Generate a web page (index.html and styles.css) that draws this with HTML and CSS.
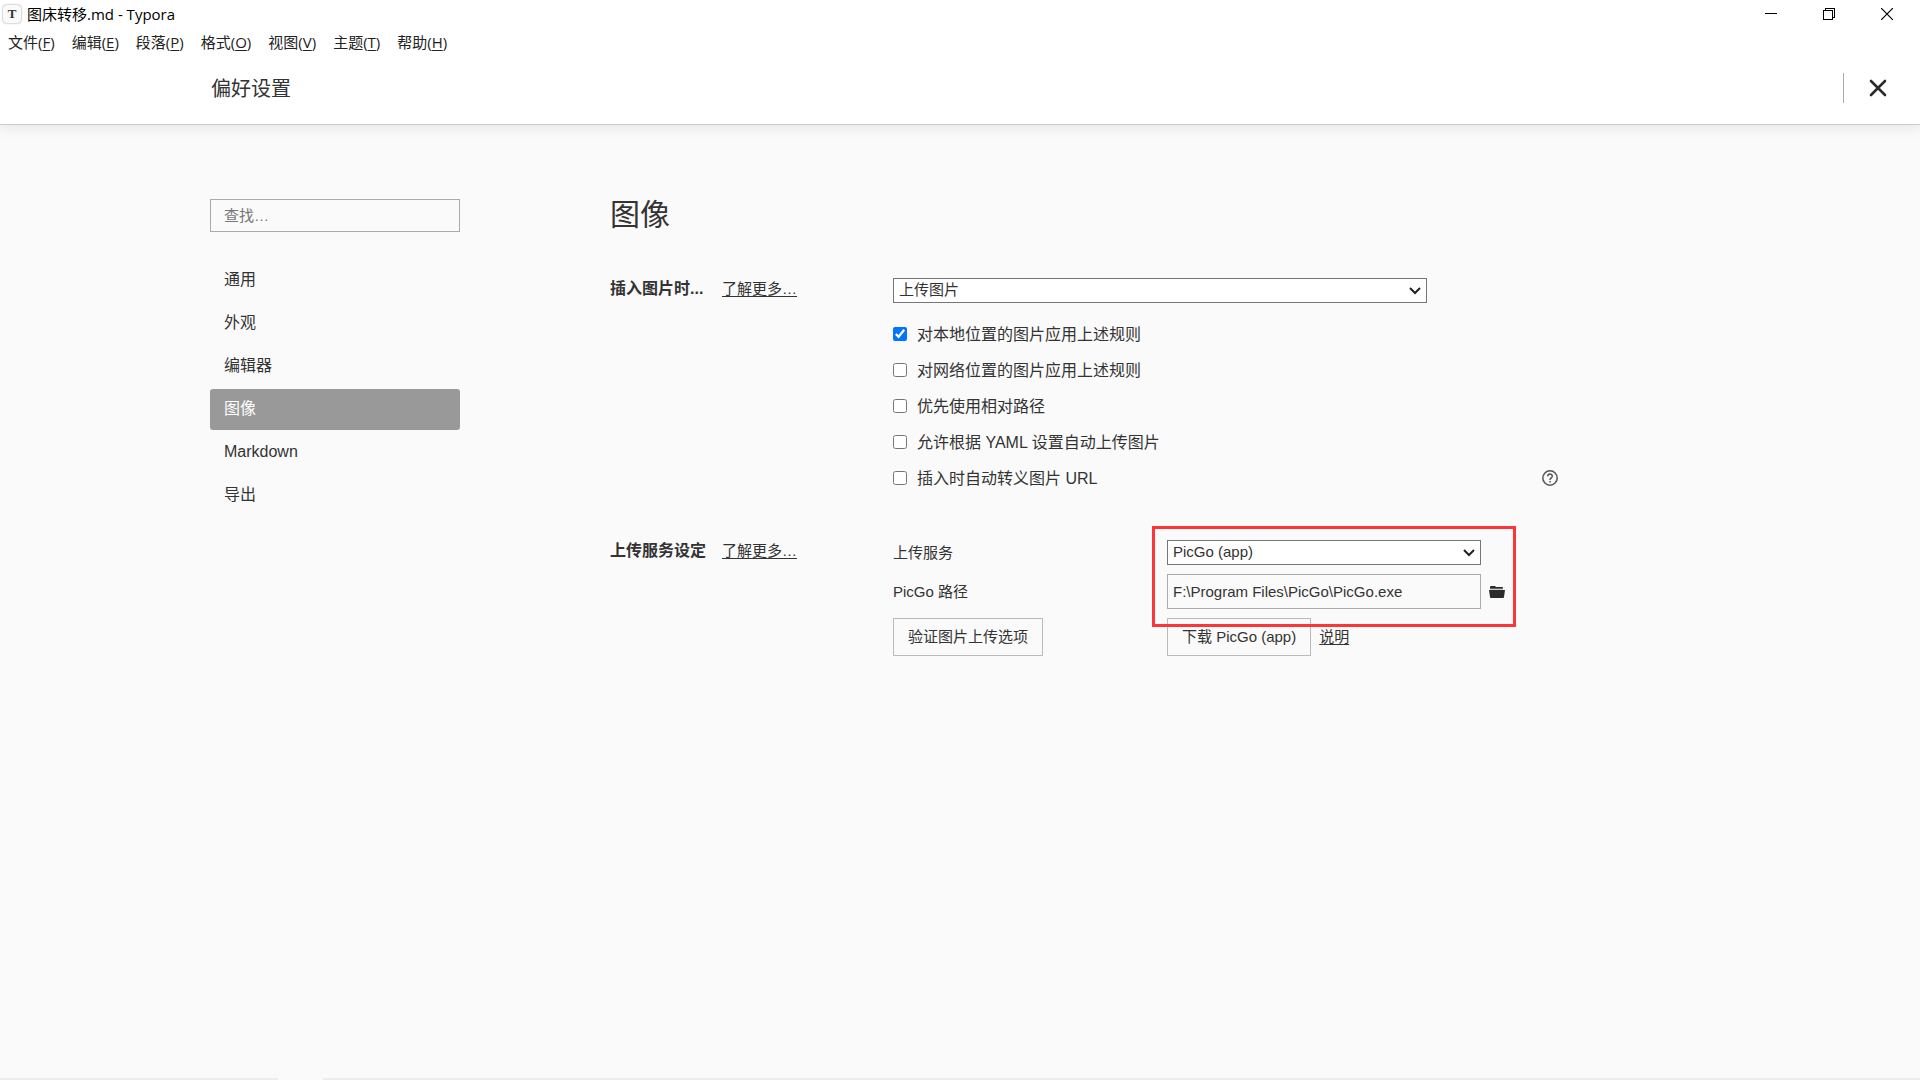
FILE: index.html
```html
<!DOCTYPE html>
<html lang="zh-CN">
<head>
<meta charset="utf-8">
<meta name="viewport" content="width=device-width, initial-scale=1">
<title>图床转移.md - Typora</title>
<link rel="stylesheet" href="styles.css">
</head>
<body>
<header class="top">
  <div class="titlebar">
    <span class="app-icon" aria-hidden="true">T</span>
    <span class="window-title">图床转移.md - Typora</span>
    <div class="window-controls">
      <button class="window-button" type="button" aria-label="最小化"><svg width="12" height="12" viewBox="0 0 12 12" shape-rendering="crispEdges"><path d="M0 5h12v1H0z"/></svg></button>
      <button class="window-button" type="button" aria-label="还原"><svg width="12" height="12" viewBox="0 0 12 12" fill="none" stroke="#000" shape-rendering="crispEdges"><path d="M.5 2.500h9v9h-9zM2.500 2.500v-2h9v9h-2"/></svg></button>
      <button class="window-button" type="button" aria-label="关闭窗口"><svg width="12" height="12" viewBox="0 0 12 12" fill="none" stroke="#000" stroke-width="1.200"><path d="M0 0l12 12M12 0L0 12"/></svg></button>
    </div>
  </div>
  <nav class="menubar" aria-label="菜单">
    <button class="menu-item" type="button">文件(<u>F</u>)</button>
    <button class="menu-item" type="button">编辑(<u>E</u>)</button>
    <button class="menu-item" type="button">段落(<u>P</u>)</button>
    <button class="menu-item" type="button">格式(<u>O</u>)</button>
    <button class="menu-item" type="button">视图(<u>V</u>)</button>
    <button class="menu-item" type="button">主题(<u>T</u>)</button>
    <button class="menu-item" type="button">帮助(<u>H</u>)</button>
  </nav>
  <div class="panel-header">
    <h1 class="panel-title">偏好设置</h1>
    <div class="panel-close-area">
      <button class="panel-close" type="button" aria-label="关闭"><svg width="18" height="18" viewBox="0 0 18 18" fill="none" stroke="#2b2b2b" stroke-width="2.600" stroke-linecap="round"><path d="M2 2l14 14M16 2L2 16"/></svg></button>
    </div>
  </div>
</header>

<div class="content">
  <aside class="sidebar">
    <input class="text-input search" type="search" placeholder="查找…" aria-label="查找">
    <nav class="sections">
      <a class="section-link" href="#general">通用</a>
      <a class="section-link" href="#appearance">外观</a>
      <a class="section-link" href="#editor">编辑器</a>
      <a class="section-link active" href="#image" aria-current="page">图像</a>
      <a class="section-link" href="#markdown">Markdown</a>
      <a class="section-link" href="#export">导出</a>
    </nav>
  </aside>

  <main class="main" id="image">
    <h2 class="main-title">图像</h2>

    <section class="group">
      <div class="group-label">
        <label class="group-name" for="insert-action">插入图片时...</label>
        <a class="more" href="#learn-insert">了解更多…</a>
      </div>
      <div class="group-body">
        <div class="select-box select-wide">
          <select class="select" id="insert-action"><option>上传图片</option></select>
          <svg class="chevron" width="12" height="8" viewBox="0 0 12 8" fill="none" stroke="#222" stroke-width="2"><path d="M1 1l5 5 5-5"/></svg>
        </div>
        <div class="checks">
          <div class="check-row"><label class="check"><input class="checkbox" type="checkbox" checked>对本地位置的图片应用上述规则</label></div>
          <div class="check-row"><label class="check"><input class="checkbox" type="checkbox">对网络位置的图片应用上述规则</label></div>
          <div class="check-row"><label class="check"><input class="checkbox" type="checkbox">优先使用相对路径</label></div>
          <div class="check-row"><label class="check"><input class="checkbox" type="checkbox">允许根据 YAML 设置自动上传图片</label></div>
          <div class="check-row"><label class="check"><input class="checkbox" type="checkbox">插入时自动转义图片 URL</label>
            <button class="icon-button help" type="button" aria-label="帮助"><svg width="16" height="16" viewBox="0 0 16 16" fill="none" stroke="#555" stroke-width="1.500"><circle cx="8" cy="8" r="7.200"/><path d="M5.700 6.300C5.700 3.300 10.300 3.300 10.300 6.200C10.300 7.800 8 7.900 8 9.900M8 11v1.600"/></svg></button>
          </div>
        </div>
      </div>
    </section>

    <section class="group">
      <div class="group-label">
        <h3 class="group-name">上传服务设定</h3>
        <a class="more" href="#learn-upload">了解更多…</a>
      </div>
      <div class="group-body upload">
        <div class="highlight" aria-hidden="true"></div>
        <label class="field-label" for="service">上传服务</label>
        <div class="select-box">
          <select class="select" id="service"><option>PicGo (app)</option></select>
          <svg class="chevron" width="12" height="8" viewBox="0 0 12 8" fill="none" stroke="#222" stroke-width="2"><path d="M1 1l5 5 5-5"/></svg>
        </div>
        <label class="field-label" for="path">PicGo 路径</label>
        <div class="path-field">
          <input class="text-input path" id="path" type="text" value="F:\Program Files\PicGo\PicGo.exe">
          <button class="icon-button" type="button" aria-label="选择文件"><svg width="16" height="12" viewBox="0 0 16 12" fill="#2b2b2b"><path d="M1 3V1q0-1 1-1h4l1 1h6q1 0 1 1v1z"/><path d="M0 4h16l-1 7q0 1-1 1H2q-1 0-1-1z"/><path d="M1 3h13" stroke="#999"/></svg></button>
        </div>
        <div><button class="button" type="button">验证图片上传选项</button></div>
        <div class="download">
          <button class="button" type="button">下载 PicGo (app)</button>
          <a class="more" href="#help">说明</a>
        </div>
      </div>
    </section>
  </main>
</div>
<footer class="bottom-edge"></footer>
</body>
</html>
```
FILE: styles.css
```css
* { box-sizing: border-box; }

body {
  display: flex;
  flex-direction: column;
  min-height: 100vh;
  margin: 0;
  background: #fafafa;
  color: #333;
  font: 15px/20px "Liberation Sans", "Noto Sans CJK SC", sans-serif;
}

button, input, select {
  margin: 0;
  padding: 0;
  border: 0;
  border-radius: 0;
  background: none;
  color: inherit;
  font: inherit;
}

svg { display: block; }
h1, h2, h3 { margin: 0; }

/* Window chrome */
.top {
  background: #fff;
  border-bottom: 1px solid #ccc;
  box-shadow: 0 0 16px rgba(0, 0, 0, .12);
}

.titlebar, .menubar {
  display: flex;
  align-items: center;
  color: #000;
  font-family: "Open Sans", "Noto Sans CJK SC", sans-serif;
}

.titlebar {
  height: 28px;
  padding: 0 4px 0 3px;
  gap: 6px;
}

.app-icon {
  width: 18px;
  height: 18px;
  border-radius: 4px;
  background: #fafafa;
  box-shadow: 0 0 2px rgba(0, 0, 0, .5);
  color: #333;
  font: bold 13px/18px "Liberation Serif", serif;
  text-align: center;
}

.window-controls {
  display: flex;
  align-self: stretch;
  margin-left: auto;
}

.window-button {
  display: grid;
  place-items: center;
  width: 58px;
}

.menubar {
  height: 28px;
  padding-left: 8px;
  gap: 17px;
}

.menu-item { color: #222; }
.menu-item u { text-underline-offset: 2px; }

.panel-header {
  display: flex;
  align-items: center;
  justify-content: space-between;
  height: 68px;
  padding: 0 33px 4px 211px;
}

.panel-title { padding-top: 2px; font-size: 20px; line-height: 30px; font-weight: 400; }

.panel-close-area {
  display: flex;
  align-items: center;
  height: 30px;
  padding-left: 25px;
  border-left: 1px solid #aaa;
}

/* Page layout */
.content {
  display: grid;
  grid-template-columns: 250px minmax(0, 948px);
  gap: 150px;
  flex: 1;
  padding: 70px 32px 32px 210px;
}

.sidebar { padding-top: 4px; }

.text-input { border: 1px solid #aaa; }

.search {
  width: 100%;
  height: 33px;
  padding: 0 13px;
  appearance: none;
}
.search::placeholder { color: #777; }

.sections {
  display: grid;
  gap: 2px;
  margin-top: 28px;
}

.section-link {
  padding: 10px 14px 11px;
  border-radius: 3px;
  color: inherit;
  font-size: 16px;
  text-decoration: none;
}
.section-link.active { background: #999; color: #fff; }

.main-title { font-size: 30px; line-height: 40px; font-weight: 400; }

.group {
  display: grid;
  grid-template-columns: 283px 1fr;
  margin-top: 43px;
}

.group-label { display: flex; gap: 14px; line-height: 22px; }
.group-name { min-width: 98px; font-size: 16px; font-weight: 700; }
.more { color: inherit; text-underline-offset: 2px; }

/* Form controls */
.select-box { display: grid; align-items: center; }
.select-wide { max-width: 534px; }
.select-box > * { grid-area: 1 / 1; }

.select {
  height: 25px;
  padding: 0 5px 2px;
  border: 1px solid #767676;
  background: #fff;
  appearance: none;
}

.chevron { justify-self: end; margin-right: 6px; pointer-events: none; }

.checks { padding-top: 14px; font-size: 16px; }
.check-row {
  display: flex;
  align-items: center;
  justify-content: space-between;
  height: 36px;
}
.check { display: flex; align-items: center; gap: 10px; }
.checkbox { width: 14px; height: 14px; }
.checkbox, .help { margin-bottom: 3px; }
.checkbox { accent-color: #0075ff; }

.upload {
  position: relative;
  display: grid;
  grid-template-columns: 274px 314px;
  grid-template-rows: 25px 35px 38px;
  row-gap: 9px;
  align-items: center;
}

.path-field { display: flex; align-items: center; gap: 8px; }
.path { flex: none; width: 100%; height: 35px; padding: 0 5px; }

.button {
  height: 38px;
  padding: 0 14px 1px;
  border: 1px solid #bbb;
}

.download { display: flex; align-items: center; gap: 8px; }

/* Callout frame drawn over the service settings */
.highlight {
  position: absolute;
  top: -14px;
  left: 259px;
  width: 364px;
  height: 101px;
  border: 3px solid #fa3636;
  pointer-events: none;
  z-index: 1;
}

.bottom-edge {
  height: 2px;
  background: linear-gradient(to right, #ececec 278px, #fafafa 278px, #fafafa 323px, #ececec 323px);
}
```
